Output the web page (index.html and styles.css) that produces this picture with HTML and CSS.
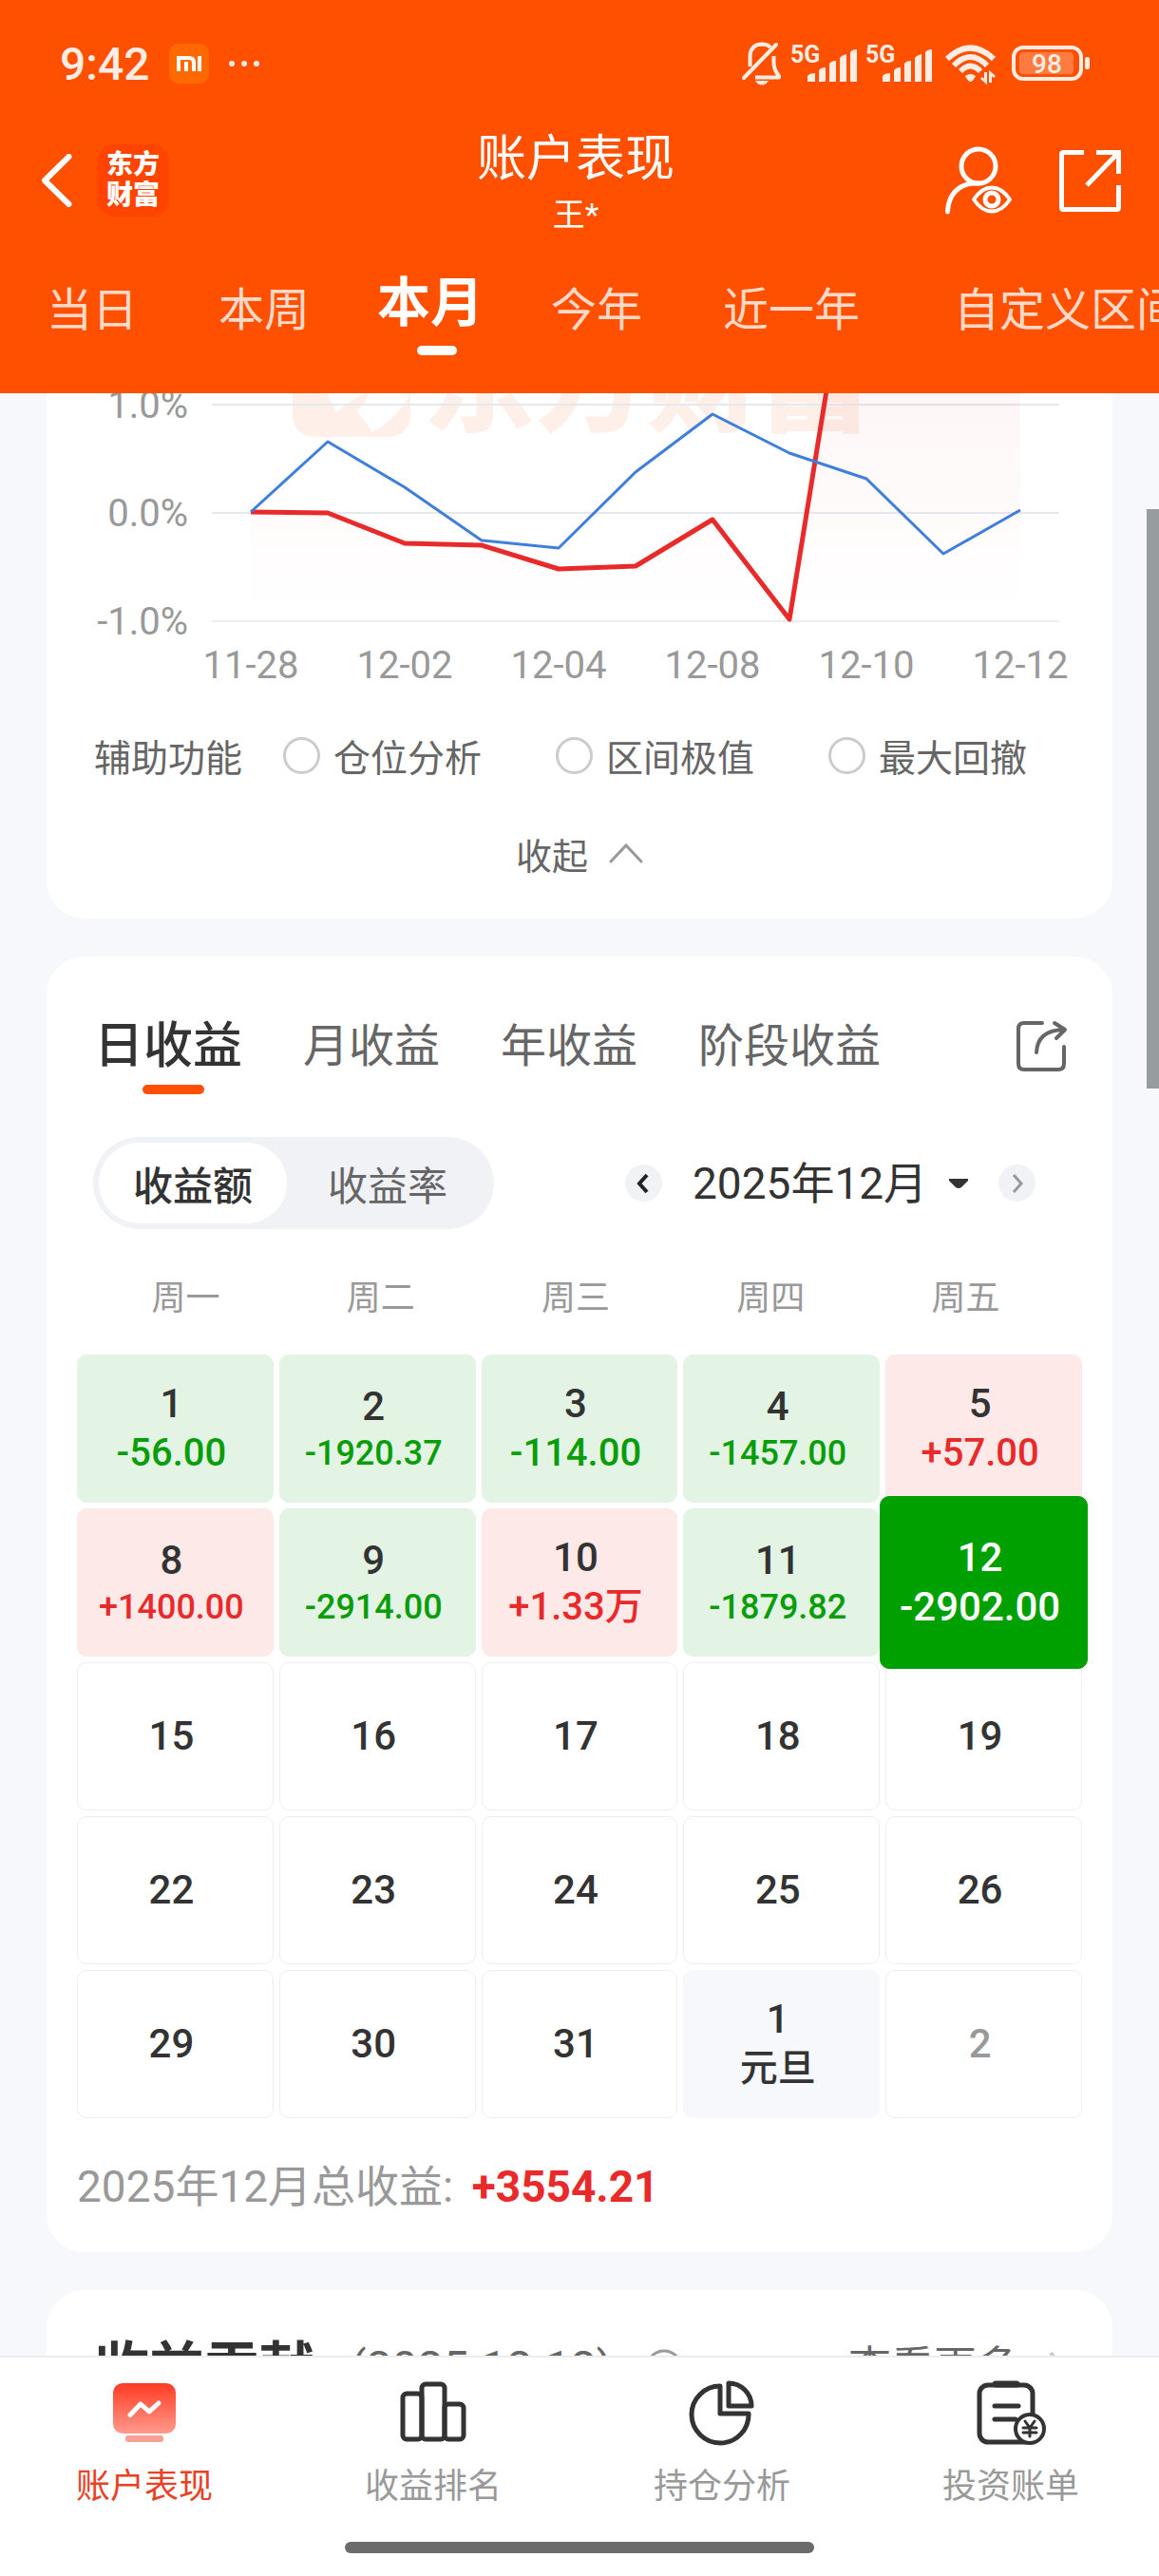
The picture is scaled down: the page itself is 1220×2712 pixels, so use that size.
FILE: index.html
```html
<!DOCTYPE html>
<html lang="zh-CN">
<head>
  <meta charset="UTF-8">
  <meta name="viewport" content="width=device-width, initial-scale=1">
  <title>账户表现</title>
  <link rel="stylesheet" href="styles.css">
</head>
<body>

  <!-- 顶部 -->
  <header>
    <div class="status-bar">
      <span class="time">9:42</span>
      <svg class="mi-icon" width="42" height="42" viewBox="0 0 42 42">
        <rect width="42" height="42" rx="10" fill="#ff6900"/>
        <path d="M10 29V15H21Q26 15 26 20V29M18 19V29M32 13V29" fill="none" stroke="#fff" stroke-width="4"/>
      </svg>
      <svg class="more-dots" width="34" height="8" viewBox="0 0 34 8">
        <circle cx="4" cy="4" r="3"/><circle cx="17" cy="4" r="3"/><circle cx="30" cy="4" r="3"/>
      </svg>

      <div class="status-icons">
        <svg width="44" height="48" viewBox="0 0 44 48" fill="none" stroke="#ffece3" stroke-width="4" stroke-linecap="round" stroke-linejoin="round">
          <path d="M3 39L37 4"/>
          <path d="M9.500 27V16Q10 4 22 3.500Q28 3.500 31 7" stroke-linecap="butt"/>
          <path d="M34.500 16V24Q35 31 40 37V38.500H15" stroke-linecap="butt"/>
          <path d="M15 42H29Q26 46.500 22 46.500T15 42Z" fill="#ffece3" stroke="none"/>
        </svg>
        <svg class="signal" width="71" height="42" viewBox="0 0 71 42">
          <text x="0" y="20">5G</text>
          <path d="M18 40V34Q20 31 26 31V40ZM30 40V28Q32 25 37 25V40ZM41 40V21Q43 18 48 18V40ZM52 40V15Q54 12 59 11V40ZM63 40V9Q65 6 70 6V40Z"/>
        </svg>
        <svg class="signal" width="71" height="42" viewBox="0 0 71 42">
          <text x="0" y="20">5G</text>
          <path d="M18 40V34Q20 31 26 31V40ZM30 40V28Q32 25 37 25V40ZM41 40V21Q43 18 48 18V40ZM52 40V15Q54 12 59 11V40ZM63 40V9Q65 6 70 6V40Z"/>
        </svg>
        <svg class="wifi" width="55" height="44" viewBox="0 0 55 44" fill="none" stroke="#ffece3">
          <path d="M3 17Q27.500 -6 52 17M10 24Q27.500 6 45 24M17 30Q27.500 19 38 30" stroke-width="6"/>
          <path d="M22 35Q27.500 31 33 35Q30 41 27.500 41T22 35Z" fill="#ffece3" stroke="none"/>
          <path d="M39 37L43.500 41V31M48.500 42V32L53 36" stroke-width="3"/>
        </svg>
        <svg class="battery" width="82" height="38" viewBox="0 0 82 38">
          <rect x="2" y="2" width="71" height="33" rx="10" fill="none" stroke="#ffece3" stroke-width="4"/>
          <rect x="8" y="7" width="57" height="23" rx="4" fill="#ff7b3f"/>
          <rect x="77" y="12" width="5" height="13" rx="2" fill="#ffece3"/>
          <text x="37" y="29">98</text>
        </svg>
      </div>
    </div>

    <div class="nav-bar">
      <div class="nav-left">
        <button class="icon-btn" aria-label="返回">
          <svg width="32" height="56" viewBox="0 0 32 56" fill="none" stroke="#fff" stroke-width="6" stroke-linecap="round" stroke-linejoin="round">
            <path d="M28.500 3L3 28L28.500 53"/>
          </svg>
        </button>
        <a class="logo" href="#">东方<br>财富</a>
      </div>
      <div class="nav-title">
        <h1>账户表现</h1>
        <p>王*</p>
      </div>
      <div class="nav-right">
        <button class="icon-btn" aria-label="账户查看">
          <svg width="80" height="80" viewBox="0 0 80 80" fill="none" stroke="#fff" stroke-width="5">
            <circle cx="41" cy="25" r="18"/>
            <path d="M8.500 73C9 56 19 44 36 43H41" stroke-linecap="round"/>
            <path d="M36 60C42 51 48 47.500 55 47.500S68 51 74 60C68 69 62 72.500 55 72.500S42 69 36 60Z" stroke-width="4" stroke-linejoin="round"/>
            <circle cx="55" cy="60" r="7"/>
          </svg>
        </button>
        <button class="icon-btn" aria-label="分享">
          <svg width="70" height="72" viewBox="0 0 70 72" fill="none" stroke="#fff" stroke-width="5">
            <path d="M31 6.500H9.500Q7.500 6.500 7.500 8.500V64.500Q7.500 66.500 9.500 66.500H65.500Q67.500 66.500 67.500 64.500V41"/>
            <path d="M44 6.500H67.500V29M67 7L34 41"/>
          </svg>
        </button>
      </div>
    </div>

    <nav class="period-tabs">
      <a href="#">当日</a>
      <a href="#">本周</a>
      <a href="#" class="active">本月</a>
      <a href="#">今年</a>
      <a href="#">近一年</a>
      <a href="#" class="custom">自定义区间</a>
    </nav>
  </header>

  <main>
    <!-- 收益走势 -->
    <section class="card chart-card">
      <svg class="chart" viewBox="0 0 1122 316">
        <defs>
          <linearGradient id="area" gradientUnits="userSpaceOnUse" x1="0" y1="-100" x2="0" y2="230">
            <stop offset="0" stop-color="#e52a2a" stop-opacity="0.06"/>
            <stop offset="1" stop-color="#e52a2a" stop-opacity="0"/>
          </linearGradient>
        </defs>
        <g class="watermark">
          <rect x="259" y="-78" width="124" height="124" rx="22"/>
          <path d="M295 0L305.500 20Q318 8 336 0Z" fill="#fff"/>
          <path d="M383 0Q372 24 343 41Q337 31 327 19Q336 10 339 0Z" fill="#fff"/>
          <text x="396" y="31">东方财富</text>
        </g>
        <g class="grid">
          <path d="M174 12H1066M174 126H1066"/>
          <path d="M174 240H1066" class="base"/>
        </g>
        <path d="M215 125L296 126L377 158L458 160L539 185L620 182L701 133L782 238L863 -262H1025V240H215Z" fill="url(#area)"/>
        <polyline class="line-red" points="215,125 296,126 377,158 458,160 539,185 620,182 701,133 782,238 863,-262"/>
        <polyline class="line-blue" points="215,125 296,51 377,99 458,155 539,163 620,83 701,22 782,63 863,90 944,169 1025,123"/>
        <g class="y-label">
          <text x="149" y="26">1.0%</text>
          <text x="149" y="140">0.0%</text>
          <text x="149" y="254">-1.0%</text>
        </g>
        <g class="x-label">
          <text x="215" y="300">11-28</text>
          <text x="377" y="300">12-02</text>
          <text x="539" y="300">12-04</text>
          <text x="701" y="300">12-08</text>
          <text x="863" y="300">12-10</text>
          <text x="1025" y="300">12-12</text>
        </g>
      </svg>

      <div class="assist">
        <span>辅助功能</span>
        <div class="assist-options">
          <label><input type="radio" name="assist">仓位分析</label>
          <label><input type="radio" name="assist">区间极值</label>
          <label><input type="radio" name="assist">最大回撤</label>
        </div>
      </div>

      <button class="collapse">
        收起
        <svg width="36" height="22" viewBox="0 0 36 22" fill="none" stroke="#999" stroke-width="3" stroke-linecap="round">
          <path d="M2 20L18 3L34 20"/>
        </svg>
      </button>
    </section>

    <!-- 收益日历 -->
    <section class="card calendar-card">
      <div class="income-tabs">
        <a href="#" class="active">日收益</a>
        <a href="#">月收益</a>
        <a href="#">年收益</a>
        <a href="#">阶段收益</a>
        <button class="icon-btn share" aria-label="分享">
          <svg width="56" height="56" viewBox="0 0 56 56" fill="none" stroke="#666" stroke-width="4" stroke-linecap="round" stroke-linejoin="round">
            <path d="M28 3H9Q3 3 3 9V46Q3 52 9 52H45Q51 52 51 46V28"/>
            <path d="M22 34Q23 11 50 10M41 3L52 10L43 19"/>
          </svg>
        </button>
      </div>

      <div class="toolbar">
        <div class="segment">
          <button class="active">收益额</button>
          <button>收益率</button>
        </div>
        <div class="month-picker">
          <button class="round-btn" aria-label="上个月">
            <svg width="39" height="39" viewBox="0 0 39 39" fill="none" stroke="#222" stroke-width="4"><path d="M23 11L15 20L23 29"/></svg>
          </button>
          <select aria-label="月份">
            <option>2025年12月</option>
          </select>
          <svg class="caret" width="20" height="10" viewBox="0 0 20 10"><path d="M0 0H20V2L13 9Q10 11 7 9L0 2Z" fill="#333"/></svg>
          <button class="round-btn" aria-label="下个月">
            <svg width="39" height="39" viewBox="0 0 39 39" fill="none" stroke="#999" stroke-width="3"><path d="M16 11L24 20L16 29"/></svg>
          </button>
        </div>
      </div>

      <div class="weekdays">
        <span>周一</span><span>周二</span><span>周三</span><span>周四</span><span>周五</span>
      </div>

      <div class="days">
        <button class="day loss">1<span>-56.00</span></button>
        <button class="day loss">2<span class="long">-1920.37</span></button>
        <button class="day loss">3<span>-114.00</span></button>
        <button class="day loss">4<span class="long">-1457.00</span></button>
        <button class="day gain">5<span>+57.00</span></button>

        <button class="day gain">8<span class="long">+1400.00</span></button>
        <button class="day loss">9<span class="long">-2914.00</span></button>
        <button class="day gain">10<span>+1.33万</span></button>
        <button class="day loss">11<span class="long">-1879.82</span></button>
        <button class="day loss selected">12<span>-2902.00</span></button>

        <button class="day">15</button>
        <button class="day">16</button>
        <button class="day">17</button>
        <button class="day">18</button>
        <button class="day">19</button>

        <button class="day">22</button>
        <button class="day">23</button>
        <button class="day">24</button>
        <button class="day">25</button>
        <button class="day">26</button>

        <button class="day">29</button>
        <button class="day">30</button>
        <button class="day">31</button>
        <button class="day holiday">1<span>元旦</span></button>
        <button class="day other">2</button>
      </div>

      <p class="total">2025年12月总收益: <strong>+3554.21</strong></p>
    </section>

    <!-- 收益贡献 -->
    <section class="card contrib-card">
      <h2>收益贡献</h2>
      <span class="date">(2025-12-12)</span>
      <svg width="40" height="40" viewBox="0 0 40 40" fill="none" stroke="#999" stroke-width="3">
        <circle cx="20" cy="20" r="18"/><path d="M20 18V29M20 11V14"/>
      </svg>
      <a href="#">查看更多
        <svg width="18" height="36" viewBox="0 0 18 36" fill="none" stroke="#ccc" stroke-width="4"><path d="M3 2L15 18L3 34"/></svg>
      </a>
    </section>

    <div class="scrollbar"></div>
  </main>

  <!-- 底部导航 -->
  <footer>
    <nav class="tab-bar">
      <a href="#" class="active">
        <svg width="70" height="70" viewBox="0 0 70 70">
          <defs>
            <linearGradient id="tab" x1="0" y1="0" x2="0" y2="1">
              <stop offset="0" stop-color="#ff3b22"/>
              <stop offset="1" stop-color="#ff9a8c"/>
            </linearGradient>
          </defs>
          <rect x="2" y="3" width="66" height="53" rx="10" fill="url(#tab)"/>
          <rect x="15" y="58" width="40" height="7" rx="3" fill="#f7a094"/>
          <path d="M20 36.500L31 25L40 33L50 24" fill="none" stroke="#fff" stroke-width="5" stroke-linecap="round" stroke-linejoin="round"/>
        </svg>
        账户表现
      </a>
      <a href="#">
        <svg width="70" height="70" viewBox="0 0 70 70" fill="none" stroke="#333" stroke-width="5">
          <rect x="3" y="14" width="20" height="48" rx="4"/>
          <rect x="23" y="4" width="24" height="58" rx="4"/>
          <rect x="47" y="25" width="20" height="37" rx="4"/>
        </svg>
        收益排名
      </a>
      <a href="#">
        <svg width="70" height="70" viewBox="0 0 70 70" fill="none" stroke="#333" stroke-width="5" stroke-linejoin="round">
          <path d="M33 6V35H63A30 30 0 1 1 33 6Z"/>
          <path d="M42 3V27H66A24 24 0 0 0 42 3Z"/>
        </svg>
        持仓分析
      </a>
      <a href="#">
        <svg width="74" height="70" viewBox="0 0 74 70" fill="none" stroke="#333" stroke-width="5" stroke-linecap="round">
          <rect x="4" y="5" width="56" height="60" rx="9"/>
          <path d="M21 4H43" stroke-width="7"/>
          <path d="M20 27H45M20 41H42"/>
          <circle cx="57" cy="51" r="15" fill="#fff" stroke-width="4"/>
          <path d="M52 43L57 50L62 43M57 50V59M50 50H64M50 55H64" stroke-width="3"/>
        </svg>
        投资账单
      </a>
    </nav>
    <div class="home-bar"></div>
  </footer>

</body>
</html>
```

FILE: styles.css
```css
* {
  box-sizing: border-box;
}
body {
  margin: 0;
  height: 100vh;
  display: flex;
  flex-direction: column;
  overflow: hidden;
  background: #f6f8fb;
  color: #333;
  font-family: Roboto, "Noto Sans CJK SC", sans-serif;
}
h1, h2, p {
  margin: 0;
  font-weight: 400;
}
a {
  color: inherit;
  text-decoration: none;
}
button, select {
  margin: 0;
  padding: 0;
  border: none;
  background: none;
  color: inherit;
  font: inherit;
  cursor: pointer;
}
svg {
  display: block;
  flex: none;
}

/* 顶部 */
header {
  flex: none;
  background: #ff5000;
  color: #fff;
  overflow: hidden;
}
.status-bar {
  display: flex;
  align-items: center;
  height: 134px;
  padding: 0 73px 0 63px;
  color: #ffece3;
}
.time {
  font-size: 48px;
  font-weight: 500;
}
.mi-icon {
  margin: 0 20px;
}
.more-dots {
  fill: #ffece3;
}
.status-icons {
  display: flex;
  align-items: center;
  gap: 8px;
  margin-left: auto;
}
.status-icons text {
  fill: #ffece3;
  font-size: 25px;
  font-weight: 700;
}
.signal {
  fill: #ffece3;
  overflow: visible;
}
.wifi {
  margin: 0 8px 0 4px;
}
.battery text {
  font-size: 28px;
  font-weight: 500;
  text-anchor: middle;
}

.nav-bar {
  display: grid;
  grid-template-columns: 1fr auto 1fr;
  height: 118px;
  padding: 0 40px 0 32px;
}
.nav-left, .nav-right {
  display: flex;
  align-items: center;
  height: 112px;
}
.nav-left {
  gap: 26px;
  padding-left: 12px;
}
.nav-right {
  justify-content: flex-end;
  gap: 41px;
}
.logo {
  padding: 6px 10px;
  border-radius: 18px;
  background: #ff4400;
  font-size: 28px;
  font-weight: 900;
  line-height: 32px;
}
.nav-title {
  text-align: center;
}
.nav-title h1 {
  font-size: 52px;
  line-height: 68px;
}
.nav-title p {
  font-size: 34px;
  line-height: 48px;
}

.period-tabs {
  display: flex;
  align-items: flex-start;
  gap: 85px;
  height: 162px;
  padding: 36px 0 0 49px;
  white-space: nowrap;
  font-size: 48px;
  line-height: 78px;
}
.period-tabs a {
  position: relative;
  color: #ffd9c7;
}
.period-tabs .active {
  margin: 0 -14px;
  color: #fff;
  font-size: 56px;
  font-weight: 700;
  line-height: 62px;
}
.period-tabs .active::after {
  content: "";
  position: absolute;
  top: 76px;
  left: 42px;
  width: 42px;
  height: 10px;
  border-radius: 5px;
  background: #fff;
}
.period-tabs .custom {
  margin-left: 14px;
}

/* 内容区 */
main {
  position: relative;
  flex: 1;
  min-height: 0;
  overflow: hidden;
  padding: 0 49px;
}
.card {
  margin-bottom: 40px;
  border-radius: 40px;
  background: #fff;
}
.chart-card {
  border-top-left-radius: 0;
  border-top-right-radius: 0;
  padding-bottom: 31px;
}
.chart {
  width: 100%;
  height: auto;
}
.chart text {
  fill: #999;
  font-size: 40px;
}
.chart .watermark {
  fill: #feefe8;
}
.chart .watermark text {
  fill: #feefe8;
  font-size: 118px;
  font-weight: 900;
}
.grid path {
  stroke: #e6e8f0;
  stroke-width: 2;
}
.grid .base {
  stroke: #ececec;
}
.y-label {
  text-anchor: end;
}
.x-label {
  text-anchor: middle;
}
.line-red, .line-blue {
  fill: none;
  stroke: #e92a2a;
  stroke-width: 5;
  stroke-linejoin: round;
}
.line-blue {
  stroke: #3f7fdb;
  stroke-width: 3;
}

.assist {
  display: flex;
  align-items: center;
  gap: 43px;
  height: 130px;
  padding: 0 50px;
  color: #666;
  font-size: 39px;
  white-space: nowrap;
}
.assist-options {
  display: flex;
  gap: 78px;
}
.assist-options label {
  display: flex;
  align-items: center;
  gap: 14px;
}
.assist-options input {
  appearance: none;
  width: 39px;
  height: 39px;
  margin: 0;
  border: 3px solid #ccc;
  border-radius: 50%;
}
.assist-options input:checked {
  border: 12px solid #ff5000;
}
.collapse {
  display: flex;
  align-items: center;
  justify-content: center;
  gap: 22px;
  width: 100%;
  height: 76px;
  color: #666;
  font-size: 38px;
}

/* 收益日历 */
.calendar-card {
  padding: 60px 32px 39px;
}
.income-tabs {
  display: flex;
  align-items: center;
  gap: 64px;
  padding: 0 14px 0 18px;
  color: #666;
  font-size: 48px;
  line-height: 70px;
}
.income-tabs .active {
  position: relative;
  color: #333;
  font-size: 52px;
  font-weight: 500;
}
.income-tabs .active::after {
  content: "";
  position: absolute;
  top: 75px;
  left: 51px;
  width: 65px;
  height: 10px;
  border-radius: 5px;
  background: #ff5000;
}
.income-tabs .share {
  margin-left: auto;
}
.toolbar {
  display: flex;
  align-items: center;
  justify-content: space-between;
  margin-top: 60px;
  padding: 0 49px 0 17px;
}
.segment {
  display: grid;
  grid-template-columns: 198px 212px;
  height: 97px;
  padding: 6px;
  border-radius: 49px;
  background: #f1f2f5;
  color: #666;
  font-size: 42px;
}
.segment .active {
  border-radius: 43px;
  background: #fff;
  color: #333;
  font-weight: 500;
}
.month-picker {
  display: flex;
  align-items: center;
}
.month-picker select {
  appearance: none;
  margin: 0 22px 0 32px;
  font-size: 46px;
}
.caret {
  margin-right: 32px;
}
.round-btn {
  border-radius: 50%;
  background: #f1f2f5;
}
.weekdays {
  display: grid;
  grid-template-columns: repeat(5, 1fr);
  margin-top: 44px;
  padding: 0 20px 0 12px;
  color: #999;
  font-size: 36px;
  line-height: 58px;
  text-align: center;
}
.days {
  display: grid;
  grid-template-columns: repeat(5, 1fr);
  grid-auto-rows: 156px;
  gap: 6px;
  margin-top: 30px;
}
.day {
  display: flex;
  flex-direction: column;
  align-items: center;
  justify-content: center;
  padding-right: 8px;
  border: 1px solid #eee;
  border-radius: 10px;
  font-size: 42px;
  font-weight: 500;
  line-height: 52px;
}
.day span {
  font-size: 40px;
}
.day .long {
  font-size: 36px;
  line-height: 46px;
}
.day.loss {
  border-color: #e3f4e4;
  background: #e3f4e4;
}
.day.loss span {
  color: #0a9d0a;
}
.day.gain {
  border-color: #fde9e8;
  background: #fde9e8;
}
.day.gain span {
  color: #e92a2a;
}
.day.selected {
  z-index: 1;
  margin: -13px -6px;
  border-color: #00a000;
  background: #00a000;
}
.day.selected, .day.selected span {
  color: #fff;
  font-size: 42px;
}
.day.holiday {
  border-color: #f6f8fb;
  background: #f6f8fb;
}
.day.other {
  color: #999;
}
.total {
  margin-top: 42px;
  color: #999;
  font-size: 46px;
  line-height: 60px;
}
.total strong {
  margin-left: 8px;
  color: #e92a2a;
}

/* 收益贡献 */
.contrib-card {
  display: flex;
  align-items: center;
  margin-bottom: 0;
  padding: 42px 50px;
  line-height: 80px;
  white-space: nowrap;
}
.contrib-card h2 {
  font-size: 58px;
  font-weight: 700;
}
.contrib-card .date {
  margin: 0 34px 0 38px;
  color: #666;
  font-size: 48px;
}
.contrib-card a {
  display: flex;
  align-items: center;
  gap: 30px;
  margin-left: auto;
  color: #666;
  font-size: 45px;
}

.scrollbar {
  position: absolute;
  top: 122px;
  right: 0;
  width: 13px;
  height: 610px;
  background: #979c9e;
}

/* 底部导航 */
footer {
  flex: none;
  padding-bottom: 24px;
  border-top: 2px solid #ececec;
  background: #fff;
}
.tab-bar {
  display: grid;
  grid-template-columns: repeat(4, 1fr);
  padding: 24px 4px 0 0;
}
.tab-bar a {
  display: flex;
  flex-direction: column;
  align-items: center;
  gap: 18px;
  color: #999;
  font-size: 36px;
  line-height: 48px;
}
.tab-bar .active {
  color: #ea4025;
}
.home-bar {
  width: 494px;
  height: 12px;
  margin: 34px auto 0;
  border-radius: 6px;
  background: #6b6b6b;
}
```
